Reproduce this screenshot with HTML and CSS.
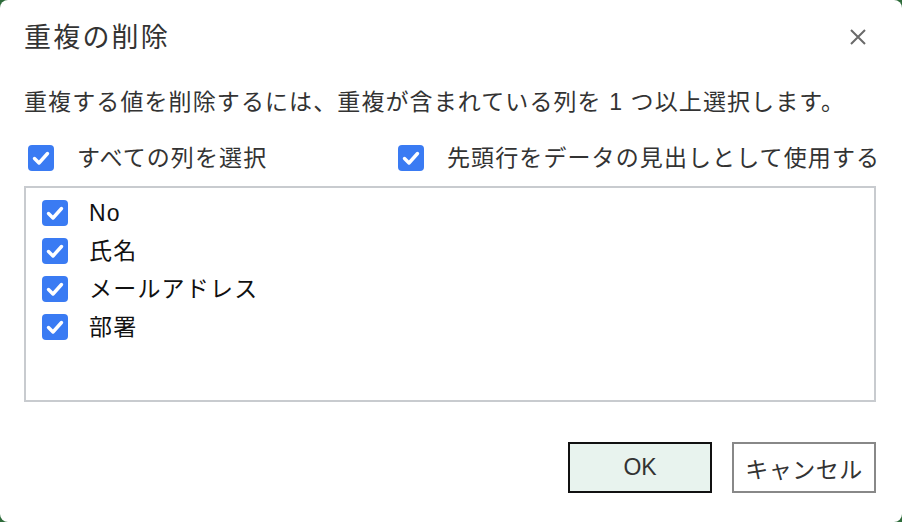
FILE: index.html
```html
<!DOCTYPE html>
<html lang="ja">
<head>
<meta charset="utf-8">
<link rel="stylesheet" href="styles.css">
</head>
<body>
<div class="dialog">
  <div class="header">
    <h1 class="title">重複の削除</h1>
    <svg class="close" width="20" height="20" viewBox="0 0 20 20"><path d="M3 3 L17 17 M17 3 L3 17" stroke="#6a6a6a" stroke-width="2" fill="none"/></svg>
  </div>
  <p class="instruction">重複する値を削除するには、重複が含まれている列を 1 つ以上選択します。</p>
  <div class="options">
    <label class="opt opt-all"><span class="cb"><svg width="26" height="26" viewBox="0 0 26 26"><path d="M6.5 13.5 L11 18 L19.5 8.5" stroke="#fff" stroke-width="3.4" fill="none" stroke-linecap="round" stroke-linejoin="round"/></svg></span>すべての列を選択</label>
    <label class="opt"><span class="cb"><svg width="26" height="26" viewBox="0 0 26 26"><path d="M6.5 13.5 L11 18 L19.5 8.5" stroke="#fff" stroke-width="3.4" fill="none" stroke-linecap="round" stroke-linejoin="round"/></svg></span>先頭行をデータの見出しとして使用する</label>
  </div>
  <div class="list">
    <label class="item"><span class="cb"><svg width="26" height="26" viewBox="0 0 26 26"><path d="M6.5 13.5 L11 18 L19.5 8.5" stroke="#fff" stroke-width="3.4" fill="none" stroke-linecap="round" stroke-linejoin="round"/></svg></span>No</label>
    <label class="item"><span class="cb"><svg width="26" height="26" viewBox="0 0 26 26"><path d="M6.5 13.5 L11 18 L19.5 8.5" stroke="#fff" stroke-width="3.4" fill="none" stroke-linecap="round" stroke-linejoin="round"/></svg></span>氏名</label>
    <label class="item"><span class="cb"><svg width="26" height="26" viewBox="0 0 26 26"><path d="M6.5 13.5 L11 18 L19.5 8.5" stroke="#fff" stroke-width="3.4" fill="none" stroke-linecap="round" stroke-linejoin="round"/></svg></span>メールアドレス</label>
    <label class="item"><span class="cb"><svg width="26" height="26" viewBox="0 0 26 26"><path d="M6.5 13.5 L11 18 L19.5 8.5" stroke="#fff" stroke-width="3.4" fill="none" stroke-linecap="round" stroke-linejoin="round"/></svg></span>部署</label>
  </div>
  <div class="buttons">
    <button class="btn btn-ok">OK</button>
    <button class="btn btn-cancel">キャンセル</button>
  </div>
</div>
</body>
</html>
```
FILE: styles.css
```css
html, body {
  margin: 0;
  padding: 0;
}
body {
  background: #2e6b3a;
  font-family: "Liberation Sans", "Noto Sans CJK JP", sans-serif;
  color: #333;
}
.dialog {
  width: 902px;
  height: 522px;
  box-sizing: border-box;
  background: #fff;
  border-radius: 8px;
  padding: 20px 26px 0 24px;
  display: flex;
  flex-direction: column;
}
.header {
  display: flex;
  justify-content: space-between;
  align-items: center;
  height: 36px;
}
.title {
  margin: 0;
  font-size: 27px;
  font-weight: normal;
  letter-spacing: 2.2px;
  line-height: 34px;
  color: #333;
}
.close {
  margin-right: 8px;
  margin-top: -2px;
}
.instruction {
  margin: 31px 0 0 0;
  font-size: 23px;
  line-height: 30px;
  letter-spacing: 1.1px;
  color: #333;
  white-space: nowrap;
}
.options {
  display: flex;
  margin-top: 26px;
  padding-left: 4px;
  height: 30px;
  align-items: center;
}
.opt {
  display: flex;
  align-items: center;
  font-size: 23px;
  line-height: 26px;
  letter-spacing: 1.1px;
  color: #333;
  white-space: nowrap;
}
.opt-all {
  flex: 0 0 370px;
}
.opt .cb {
  margin-right: 23px;
}
.cb {
  width: 26px;
  height: 26px;
  border-radius: 4px;
  background: #3a7bf3;
  display: inline-flex;
  flex: 0 0 26px;
}
.list {
  margin-top: 13px;
  height: 216px;
  box-sizing: border-box;
  border: 2px solid #c8cbcf;
  padding: 6px 0 0 16px;
  display: flex;
  flex-direction: column;
}
.item {
  display: flex;
  align-items: center;
  height: 38px;
  line-height: 26px;
  font-size: 23px;
  letter-spacing: 1.2px;
  color: #111;
  white-space: nowrap;
}
.item .cb {
  margin-right: 21px;
}
.buttons {
  display: flex;
  justify-content: flex-end;
  gap: 20px;
  margin-top: 40px;
}
.btn {
  width: 144px;
  height: 51px;
  box-sizing: border-box;
  font-family: "Liberation Sans", "Noto Sans CJK JP", sans-serif;
  font-size: 23px;
  color: #333;
  padding: 0;
}
.btn-ok {
  border: 2px solid #111;
  background: #e8f3ee;
}
.btn-cancel {
  border: 2px solid #888;
  background: #fff;
  letter-spacing: 0.5px;
}
```
